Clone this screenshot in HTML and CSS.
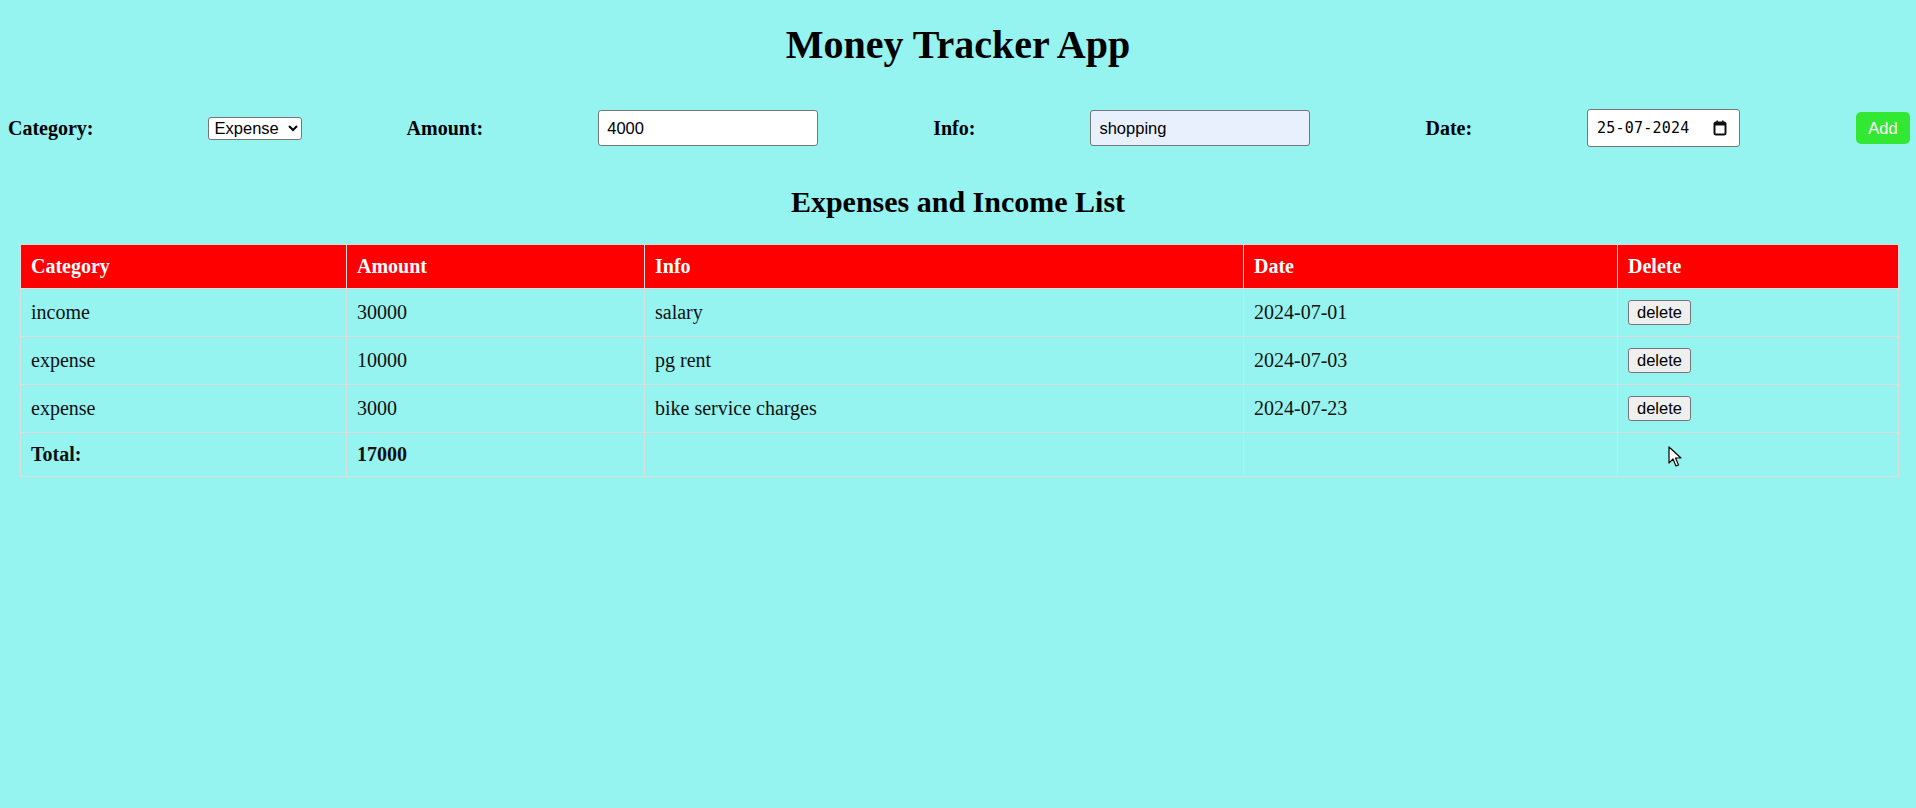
FILE: index.html
```html
<!DOCTYPE html>
<html lang="en">
<head>
<meta charset="utf-8">
<title>Money Tracker App</title>
<link rel="stylesheet" href="styles.css">
</head>
<body>
<h1 class="title">Money Tracker App</h1>
<form class="entry-form">
  <label class="field-label" for="cat">Category:</label>
  <select id="cat" class="select">
    <option>Expense</option>
    <option>Income</option>
  </select>
  <label class="field-label" for="amt">Amount:</label>
  <input id="amt" class="text-input" type="text" value="4000">
  <label class="field-label" for="info">Info:</label>
  <input id="info" class="text-input autofill" type="text" value="shopping">
  <label class="field-label" for="date">Date:</label>
  <div id="date" class="date-input">
    <span class="date-text">25-07-2024</span>
    <svg class="cal-icon" width="14" height="16" viewBox="0 0 14 16">
      <rect x="1.5" y="2.5" width="11" height="12" rx="1.5" fill="none" stroke="#111" stroke-width="2"/>
      <rect x="1.5" y="2.5" width="11" height="3" fill="#111"/>
      <rect x="3.5" y="0.5" width="1.6" height="3" fill="#111"/>
      <rect x="8.9" y="0.5" width="1.6" height="3" fill="#111"/>
    </svg>
  </div>
  <button type="button" class="add-btn">Add</button>
</form>

<h2 class="subtitle">Expenses and Income List</h2>

<table class="list-table">
  <colgroup>
    <col class="c-cat">
    <col class="c-amt">
    <col class="c-info">
    <col class="c-date">
    <col class="c-del">
  </colgroup>
  <thead>
    <tr>
      <th>Category</th>
      <th>Amount</th>
      <th>Info</th>
      <th>Date</th>
      <th>Delete</th>
    </tr>
  </thead>
  <tbody>
    <tr>
      <td>income</td>
      <td>30000</td>
      <td>salary</td>
      <td>2024-07-01</td>
      <td><button type="button" class="del-btn">delete</button></td>
    </tr>
    <tr>
      <td>expense</td>
      <td>10000</td>
      <td>pg rent</td>
      <td>2024-07-03</td>
      <td><button type="button" class="del-btn">delete</button></td>
    </tr>
    <tr>
      <td>expense</td>
      <td>3000</td>
      <td>bike service charges</td>
      <td>2024-07-23</td>
      <td><button type="button" class="del-btn">delete</button></td>
    </tr>
    <tr class="total-row">
      <td>Total:</td>
      <td>17000</td>
      <td></td>
      <td></td>
      <td></td>
    </tr>
  </tbody>
</table>

<svg class="mouse-cursor" width="14" height="22" viewBox="0 0 14 22">
  <path d="M1 1 L1 17 L5 13 L8 20 L10.5 19 L7.5 12 L13 12 Z" fill="#fff" stroke="#000" stroke-width="1.2" stroke-linejoin="round"/>
</svg>
</body>
</html>
```

FILE: styles.css
```css
html, body {
  margin: 0;
  padding: 0;
}

body {
  background: #95f3f0;
  font-family: "Liberation Serif", "Times New Roman", serif;
  font-size: 20px;
  color: #000;
  position: relative;
  min-height: 808px;
}

.title {
  margin: 22px 0 41px;
  font-size: 40px;
  font-weight: bold;
  text-align: center;
  line-height: 46px;
}

.entry-form {
  display: flex;
  align-items: center;
  justify-content: flex-start;
  gap: 115px;
  padding: 0 6px 0 8px;
  height: 38px;
}

.field-label {
  font-weight: bold;
  font-size: 20px;
}

.select {
  width: 94px;
  height: 23px;
  margin-left: -1px;
  margin-right: -10px;
  font-family: "Liberation Sans", Arial, sans-serif;
  font-size: 16.5px;
  border: 1px solid #767676;
  border-radius: 3px;
  background: #fff;
  color: #000;
  padding: 0 0 0 2px;
  box-sizing: border-box;
}

.text-input {
  width: 220px;
  height: 36px;
  box-sizing: border-box;
  border: 1px solid #767676;
  border-radius: 3px;
  padding: 1px 8px 0;
  font-family: "Liberation Sans", Arial, sans-serif;
  font-size: 16.5px;
  color: #000;
  background: #fff;
}

.autofill {
  background: #e8f0fe;
}

.date-input {
  width: 153px;
  height: 38px;
  box-sizing: border-box;
  border: 1px solid #767676;
  border-radius: 3px;
  background: #fff;
  display: flex;
  align-items: center;
  justify-content: space-between;
  padding: 0 12px 0 9px;
}

.date-text {
  font-family: "DejaVu Sans Mono", "Liberation Mono", monospace;
  font-size: 15px;
  letter-spacing: 0.2px;
  color: #000;
}

.cal-icon {
  display: block;
}

.add-btn {
  width: 54px;
  height: 32px;
  margin-left: auto;
  border: none;
  border-radius: 5px;
  background: #33e833;
  color: #fff;
  font-family: "Liberation Sans", Arial, sans-serif;
  font-size: 16.5px;
  padding: 0;
}

.subtitle {
  margin: 37px 0 25px;
  font-size: 30px;
  font-weight: bold;
  text-align: center;
  line-height: 35px;
}

.list-table {
  border-collapse: collapse;
  table-layout: fixed;
  width: 1878px;
  margin-left: 20px;
}

.c-cat { width: 326px; }
.c-amt { width: 298px; }
.c-info { width: 599px; }
.c-date { width: 374px; }
.c-del { width: 281px; }

.list-table th,
.list-table td {
  border: 1px solid #dddddd;
  padding: 10px;
  text-align: left;
  font-size: 20px;
  line-height: 23px;
}

.list-table th {
  background: #ff0000;
  color: #fff;
  font-weight: bold;
  height: 22px;
}

.list-table td {
  height: 27px;
  color: #111;
}

.total-row td {
  font-weight: bold;
  height: 22px;
}

.del-btn {
  width: 63px;
  height: 25px;
  padding: 0;
  font-family: "Liberation Sans", Arial, sans-serif;
  font-size: 16.5px;
  color: #000;
  background: #efefef;
  border: 1px solid #767676;
  border-radius: 3px;
  vertical-align: middle;
}

.mouse-cursor {
  position: absolute;
  left: 1668px;
  top: 446px;
}
```
